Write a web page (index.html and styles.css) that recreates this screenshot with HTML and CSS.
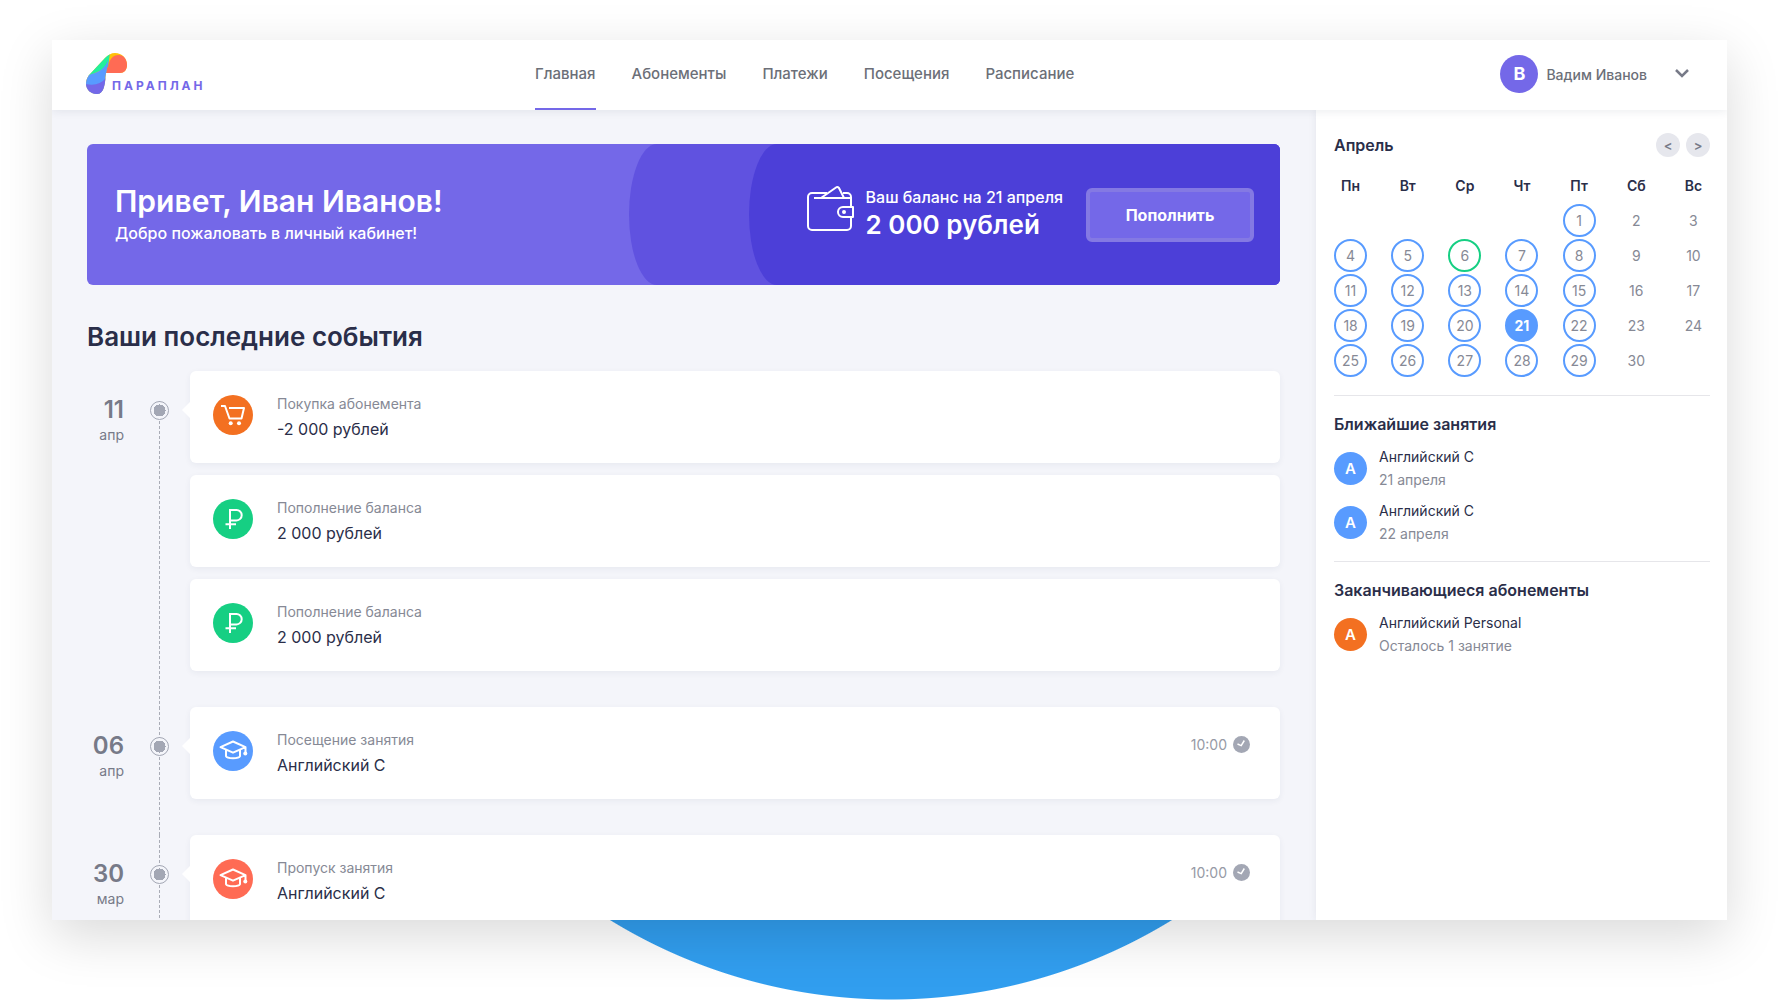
FILE: index.html
```html
<!DOCTYPE html>
<html lang="ru">
<head>
    <meta charset="UTF-8">
    <meta name="viewport" content="width=device-width, initial-scale=1.0">
    <title>Параплан</title>
    <link rel="stylesheet" href="styles.css">
</head>
<body>
    <!-- Иконки -->
    <svg class="sprite" aria-hidden="true">
        <symbol id="ruble" viewBox="0 0 40 40">
            <path d="M17 30V11h6.500a5.200 5.200 0 0 1 0 10.400H17M12.500 25.300h10.500" fill="none" stroke="#fff" stroke-width="2"/>
        </symbol>
        <symbol id="cart" viewBox="0 0 40 40">
            <path d="M8 11h4l4.500 12.500h12L31 13H16" fill="none" stroke="#fff" stroke-width="2" stroke-linejoin="round"/>
            <circle cx="17.700" cy="28.200" r="2" fill="#fff"/>
            <circle cx="26" cy="28.200" r="2" fill="#fff"/>
        </symbol>
        <symbol id="cap" viewBox="0 0 40 40">
            <path d="M7.500 16.200L20 10.500l12.500 5.700L20 21.700zM13 19.200v6c1.200 2.800 12.800 2.800 14 0v-6M32.500 16.200V22" fill="none" stroke="#fff" stroke-width="2" stroke-linejoin="round"/>
            <circle cx="32.300" cy="22.500" r="2" fill="#fff"/>
        </symbol>
        <symbol id="clock" viewBox="0 0 17 17">
            <circle cx="8.500" cy="8.500" r="8.500" fill="#a3a7b4"/>
            <path d="M4.500 8l3.700 1.600L11.300 4.500" fill="none" stroke="#fff" stroke-width="1.500"/>
        </symbol>
    </svg>

    <div class="window">
        <header class="header">
            <a href="#" class="logo">
                <svg width="42" height="42" viewBox="0 0 42 42" aria-hidden="true">
                    <clipPath id="wing">
                        <path d="M29 0C36 0 41 5 41 12c0 5-3 8-7 8H20c-1 8-1 21-9 21C5 41 0 37 0 30c0-4 2-7 5-10L19 5c3-3 6-5 10-5z"/>
                    </clipPath>
                    <g clip-path="url(#wing)">
                        <path d="M0 0h42v42H0z" fill="#ffc107"/>
                        <path d="M20 21C21 13 24 2 32 2c13 0 13 19 2 19z" fill="#ff6b54"/>
                        <path d="M0 24V0h24l-2 14z" fill="#22f09c"/>
                        <path d="M0 22c12-1 20-7 23-17l-3 16-2 21H0z" fill="#589bff"/>
                        <path d="M0 31c8 2 15 0 20-6v17H0z" fill="#7468e8"/>
                    </g>
                </svg>
                <span class="logo-text">ПАРАПЛАН</span>
            </a>
            <nav class="nav">
                <a href="#" class="active">Главная</a>
                <a href="#">Абонементы</a>
                <a href="#">Платежи</a>
                <a href="#">Посещения</a>
                <a href="#">Расписание</a>
            </nav>
            <button type="button" class="user">
                <span class="user-avatar">В</span>
                <span>Вадим Иванов</span>
                <svg class="user-arrow" width="14" height="10" viewBox="0 0 14 10" aria-hidden="true">
                    <path d="M1 1l6 6 6-6" fill="none" stroke="#777a88" stroke-width="2.500"/>
                </svg>
            </button>
        </header>

        <div class="content">
            <main class="main">
                <section class="banner">
                    <div class="hello">
                        <h1>Привет, Иван Иванов!</h1>
                        <p>Добро пожаловать в личный кабинет!</p>
                    </div>
                    <div class="banner-shape">
                        <div class="balance">
                            <svg width="48" height="46" viewBox="0 0 48 46" fill="none" stroke="#fff" stroke-width="2" stroke-linejoin="round" aria-hidden="true">
                                <path d="M44 21V11a4 4 0 0 0-4-4h-4M20 7H5a4 4 0 0 0-4 4v29a4 4 0 0 0 4 4h35a4 4 0 0 0 4-4V31"/>
                                <path d="M7 12h37M14 12L29 1.500c1-.7 2-.5 3 .5l5 10"/>
                                <path d="M46 21H36a5 5 0 0 0 0 10h10z"/>
                                <circle cx="37" cy="26" r="1"/>
                            </svg>
                            <div>
                                <p>Ваш баланс на 21 апреля</p>
                                <strong>2 000 рублей</strong>
                            </div>
                            <button type="button" class="pay">Пополнить</button>
                        </div>
                    </div>
                </section>

                <h2>Ваши последние события</h2>

                <section class="day">
                    <div class="date"><b>11</b><span>апр</span></div>
                    <div class="line"><i></i></div>
                    <div class="events">
                        <article class="event">
                            <svg class="event-icon orange"><use href="#cart"/></svg>
                            <div><p>Покупка абонемента</p><h3>-2 000 рублей</h3></div>
                        </article>
                        <article class="event">
                            <svg class="event-icon green"><use href="#ruble"/></svg>
                            <div><p>Пополнение баланса</p><h3>2 000 рублей</h3></div>
                        </article>
                        <article class="event">
                            <svg class="event-icon green"><use href="#ruble"/></svg>
                            <div><p>Пополнение баланса</p><h3>2 000 рублей</h3></div>
                        </article>
                    </div>
                </section>

                <section class="day">
                    <div class="date"><b>06</b><span>апр</span></div>
                    <div class="line"><i></i></div>
                    <div class="events">
                        <article class="event">
                            <svg class="event-icon blue"><use href="#cap"/></svg>
                            <div><p>Посещение занятия</p><h3>Английский C</h3></div>
                            <time>10:00 <svg width="17" height="17"><use href="#clock"/></svg></time>
                        </article>
                    </div>
                </section>

                <section class="day">
                    <div class="date"><b>30</b><span>мар</span></div>
                    <div class="line"><i></i></div>
                    <div class="events">
                        <article class="event">
                            <svg class="event-icon red"><use href="#cap"/></svg>
                            <div><p>Пропуск занятия</p><h3>Английский C</h3></div>
                            <time>10:00 <svg width="17" height="17"><use href="#clock"/></svg></time>
                        </article>
                    </div>
                </section>
            </main>

            <aside class="sidebar">
                <section class="block">
                    <div class="month">
                        <h4>Апрель</h4>
                        <button type="button" aria-label="Предыдущий месяц">&lt;</button>
                        <button type="button" aria-label="Следующий месяц">&gt;</button>
                    </div>
                    <table class="calendar">
                        <thead>
                            <tr><th>Пн</th><th>Вт</th><th>Ср</th><th>Чт</th><th>Пт</th><th>Сб</th><th>Вс</th></tr>
                        </thead>
                        <tbody>
                            <tr><td></td><td></td><td></td><td></td><td><span class="mark">1</span></td><td>2</td><td>3</td></tr>
                            <tr><td><span class="mark">4</span></td><td><span class="mark">5</span></td><td><span class="mark visited">6</span></td><td><span class="mark">7</span></td><td><span class="mark">8</span></td><td>9</td><td>10</td></tr>
                            <tr><td><span class="mark">11</span></td><td><span class="mark">12</span></td><td><span class="mark">13</span></td><td><span class="mark">14</span></td><td><span class="mark">15</span></td><td>16</td><td>17</td></tr>
                            <tr><td><span class="mark">18</span></td><td><span class="mark">19</span></td><td><span class="mark">20</span></td><td><span class="mark today">21</span></td><td><span class="mark">22</span></td><td>23</td><td>24</td></tr>
                            <tr><td><span class="mark">25</span></td><td><span class="mark">26</span></td><td><span class="mark">27</span></td><td><span class="mark">28</span></td><td><span class="mark">29</span></td><td>30</td><td></td></tr>
                        </tbody>
                    </table>
                </section>

                <section class="block">
                    <h4>Ближайшие занятия</h4>
                    <div class="lesson">
                        <span class="lesson-avatar blue">А</span>
                        <div><p>Английский C</p><small>21 апреля</small></div>
                    </div>
                    <div class="lesson">
                        <span class="lesson-avatar blue">А</span>
                        <div><p>Английский C</p><small>22 апреля</small></div>
                    </div>
                </section>

                <section class="block">
                    <h4>Заканчивающиеся абонементы</h4>
                    <div class="lesson">
                        <span class="lesson-avatar orange">А</span>
                        <div><p>Английский Personal</p><small>Осталось 1 занятие</small></div>
                    </div>
                </section>
            </aside>
        </div>
    </div>
</body>
</html>
```

FILE: styles.css
```css
* {
    box-sizing: border-box;
}

body {
    margin: 0;
    height: 100vh;
    padding: 40px 55px 80px 52px;
    font-family: Inter, "Liberation Sans", sans-serif;
    font-size: 14px;
    color: #2a2e49;
    /* синий круг под окном */
    background: #fff radial-gradient(circle at 50% calc(100% - 537px), #319eef 536px, transparent 537px) bottom / 100% 400px no-repeat;
}

h1, h2, h3, h4, p {
    margin: 0;
    font-weight: 500;
}

a {
    color: inherit;
    text-decoration: none;
}

button {
    font-family: inherit;
    border: none;
    padding: 0;
    cursor: pointer;
}

.sprite {
    display: none;
}

.window {
    display: flex;
    flex-direction: column;
    height: 100%;
    overflow: hidden;
    background-color: #f4f5fa;
    box-shadow: 0 16px 50px rgba(0, 0, 0, 0.15);
}

/* Шапка */
.header {
    display: grid;
    grid-template-columns: 449px auto 1fr;
    flex: none;
    height: 70px;
    padding: 0 38px 0 34px;
    background-color: #fff;
    box-shadow: 0 2px 8px rgba(40, 45, 80, 0.08);
    z-index: 1;
}

.logo {
    display: flex;
    align-items: center;
    align-self: start;
    margin-top: 13px;
}

.logo-text {
    margin: 24px 0 0 -16px;
    font-size: 12px;
    line-height: 16px;
    font-weight: 700;
    letter-spacing: 3px;
    color: #7468e8;
}

.nav {
    display: flex;
    gap: 36px;
    font-size: 15px;
    font-weight: 500;
    color: #6c6f78;
}

.nav a {
    line-height: 68px;
    border-bottom: 2px solid transparent;
}

.nav .active {
    border-color: #7468e8;
}

.user {
    display: flex;
    align-items: center;
    justify-self: end;
    gap: 8px;
    height: 68px;
    font-size: 14px;
    font-weight: 500;
    color: #6c6f78;
    background: none;
}

.user-avatar {
    width: 38px;
    line-height: 38px;
    border-radius: 50%;
    font-size: 18px;
    font-weight: 700;
    color: #fff;
    background-color: #7468e8;
}

.user-arrow {
    margin-left: 20px;
}

.content {
    display: flex;
    flex: 1;
    min-height: 0;
}

.main {
    flex: 1;
    padding: 34px 36px 0 35px;
}

/* Баннер */
.banner {
    display: flex;
    justify-content: space-between;
    align-items: center;
    height: 141px;
    padding-left: 28px;
    border-radius: 6px;
    overflow: hidden;
    color: #fff;
    background-color: #7468e8;
}

.banner h1 {
    font-size: 30px;
    line-height: 36px;
    font-weight: 600;
}

.banner p {
    font-size: 16px;
    line-height: 28px;
}

.banner-shape {
    height: 100%;
    padding-left: 120px;
    border-radius: 28px 0 0 28px / 50%;
    background-color: #6052e0;
}

.balance {
    display: flex;
    align-items: center;
    height: 100%;
    padding: 0 26px 0 58px;
    border-radius: 28px 0 0 28px / 50%;
    background-color: #4c3fd8;
}

.balance svg {
    margin-bottom: 12px;
}

.balance div {
    margin: 0 23px 8px 11px;
}

.balance strong {
    font-size: 26px;
    line-height: 28px;
    font-weight: 600;
}

.pay {
    width: 168px;
    height: 54px;
    border: 4px solid #8479e3;
    border-radius: 6px;
    font-size: 16px;
    font-weight: 700;
    color: #fff;
    background-color: #7468e8;
}

h2 {
    margin: 34px 0 16px;
    font-size: 26px;
    line-height: 36px;
    font-weight: 600;
}

/* Лента событий */
.day {
    display: flex;
}

.date {
    width: 37px;
    padding-top: 24px;
    text-align: right;
    color: #777a88;
}

.date b {
    display: block;
    font-size: 24px;
    line-height: 30px;
    font-weight: 600;
}

.date span {
    line-height: 20px;
}

.line {
    display: flex;
    justify-content: center;
    width: 19px;
    margin: 0 21px 0 26px;
    background: repeating-linear-gradient(#a9acb6 0 3px, transparent 3px 5px) center / 1px 100% no-repeat;
}

.line i {
    width: 19px;
    height: 19px;
    margin-top: 30px;
    border: 1px solid #a3a7b4;
    border-radius: 50%;
    background: radial-gradient(circle, #a3a7b4 6px, #f4f5fa 6px);
}

/* у первого дня линия начинается от точки */
h2 + .day .line {
    margin-top: 30px;
}

h2 + .day .line i {
    margin-top: 0;
}

.events {
    display: grid;
    flex: 1;
    gap: 12px;
    padding-bottom: 36px;
}

.event {
    display: flex;
    height: 92px;
    padding: 24px 30px 0 23px;
    border-radius: 6px;
    background-color: #fff;
    box-shadow: 0 2px 6px rgba(40, 45, 80, 0.06);
}

/* стрелка к дате */
.event:first-child::before {
    content: "";
    width: 8px;
    height: 16px;
    margin: 7px 23px 0 -31px;
    background-color: #fff;
    clip-path: polygon(0 50%, 100% 0, 100% 100%);
}

.event-icon {
    width: 40px;
    height: 40px;
    margin-right: 24px;
    border-radius: 50%;
}

.event p {
    font-size: 14px;
    line-height: 18px;
    font-weight: 400;
    color: #868995;
}

.event h3 {
    margin-top: 3px;
    font-size: 16px;
    line-height: 26px;
    font-weight: 400;
}

.event time {
    display: flex;
    align-items: center;
    gap: 6px;
    height: 26px;
    margin-left: auto;
    color: #969aa6;
}

.orange {
    background-color: #f37021;
}

.green {
    background-color: #16cf83;
}

.blue {
    background-color: #589bff;
}

.red {
    background-color: #ff6b54;
}

/* Правая колонка */
.sidebar {
    width: 411px;
    padding: 22px 17px 0 18px;
    background-color: #fff;
    box-shadow: 0 0 8px rgba(40, 45, 80, 0.08);
}

.block {
    padding-bottom: 16px;
    margin-bottom: 15px;
    border-bottom: 1px solid #e6e6ea;
}

.block:last-child {
    border: none;
}

.block h4 {
    font-size: 16px;
    line-height: 26px;
    font-weight: 600;
}

.month {
    display: flex;
    align-items: center;
    gap: 6px;
}

.month h4 {
    margin-right: auto;
}

.month button {
    width: 24px;
    height: 24px;
    border-radius: 50%;
    font-size: 13px;
    font-weight: 600;
    color: #777a88;
    background-color: #e6e7ed;
}

.calendar {
    width: calc(100% + 24px);
    margin: 10px -12px 1px;
    table-layout: fixed;
    border-collapse: collapse;
    text-align: center;
    color: #868995;
}

.calendar th {
    height: 35px;
    padding: 0;
    font-weight: 600;
    color: #2a2e49;
}

.calendar td {
    height: 35px;
    padding: 0;
}

.mark {
    display: block;
    width: 33px;
    margin: 0 auto;
    line-height: 29px;
    border: 2px solid #589bff;
    border-radius: 50%;
}

.visited {
    border-color: #16cf83;
}

.today {
    font-weight: 700;
    color: #fff;
    background-color: #589bff;
}

.lesson {
    display: flex;
    align-items: center;
    gap: 12px;
    margin-top: 8px;
}

.lesson-avatar {
    width: 33px;
    line-height: 33px;
    border-radius: 50%;
    text-align: center;
    font-size: 15px;
    font-weight: 600;
    color: #fff;
}

.lesson p {
    line-height: 23px;
    font-weight: 400;
}

.lesson small {
    display: block;
    font-size: 14px;
    line-height: 23px;
    color: #868995;
}
```
